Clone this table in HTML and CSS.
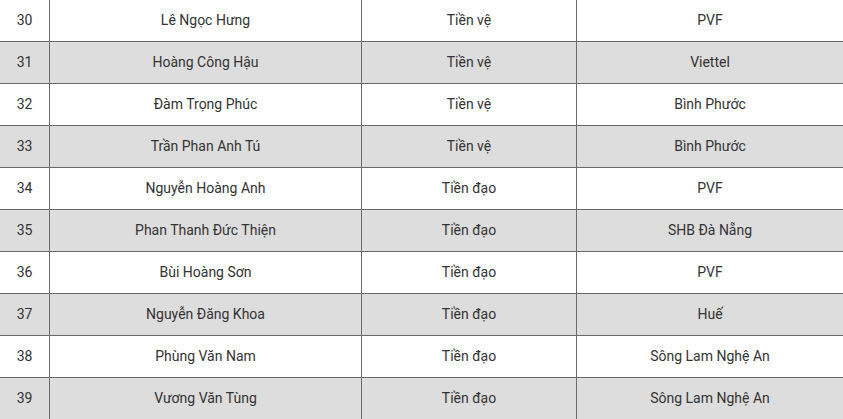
FILE: index.html
```html
<!DOCTYPE html>
<html lang="vi">
<head>
<meta charset="utf-8">
<link rel="stylesheet" href="styles.css">
</head>
<body>
<div class="table">
  <div class="row"><div class="c c1">30</div><div class="c c2">Lê Ngọc Hưng</div><div class="c c3">Tiền vệ</div><div class="c c4">PVF</div></div>
  <div class="row alt"><div class="c c1">31</div><div class="c c2">Hoàng Công Hậu</div><div class="c c3">Tiền vệ</div><div class="c c4">Viettel</div></div>
  <div class="row"><div class="c c1">32</div><div class="c c2">Đàm Trọng Phúc</div><div class="c c3">Tiền vệ</div><div class="c c4">Bình Phước</div></div>
  <div class="row alt"><div class="c c1">33</div><div class="c c2">Trần Phan Anh Tú</div><div class="c c3">Tiền vệ</div><div class="c c4">Bình Phước</div></div>
  <div class="row"><div class="c c1">34</div><div class="c c2">Nguyễn Hoàng Anh</div><div class="c c3">Tiền đạo</div><div class="c c4">PVF</div></div>
  <div class="row alt"><div class="c c1">35</div><div class="c c2">Phan Thanh Đức Thiện</div><div class="c c3">Tiền đạo</div><div class="c c4">SHB Đà Nẵng</div></div>
  <div class="row"><div class="c c1">36</div><div class="c c2">Bùi Hoàng Sơn</div><div class="c c3">Tiền đạo</div><div class="c c4">PVF</div></div>
  <div class="row alt"><div class="c c1">37</div><div class="c c2">Nguyễn Đăng Khoa</div><div class="c c3">Tiền đạo</div><div class="c c4">Huế</div></div>
  <div class="row"><div class="c c1">38</div><div class="c c2">Phùng Văn Nam</div><div class="c c3">Tiền đạo</div><div class="c c4">Sông Lam Nghệ An</div></div>
  <div class="row alt"><div class="c c1">39</div><div class="c c2">Vương Văn Tùng</div><div class="c c3">Tiền đạo</div><div class="c c4">Sông Lam Nghệ An</div></div>
</div>
</body>
</html>
```
FILE: styles.css
```css
* { box-sizing: border-box; }
html, body { margin: 0; padding: 0; background: #fff; }
body {
  font-family: Roboto, "Liberation Sans", Arial, sans-serif;
  font-size: 14px;
  color: #333;
  overflow: hidden;
}
.table { display: flex; flex-direction: column; width: 843px; }
.row {
  display: flex;
  height: 42px;
  border-bottom: 1px solid #6b6b6b;
  background: #fff;
}
.row.alt { background: #dddddd; }
.c {
  display: flex;
  align-items: center;
  justify-content: center;
  padding-bottom: 1px;
  border-right: 1px solid #6b6b6b;
  white-space: nowrap;
}
.c1 { width: 50px; }
.c2 { width: 312px; }
.c3 { width: 215px; }
.c4 { flex: 1; border-right: none; }
```
